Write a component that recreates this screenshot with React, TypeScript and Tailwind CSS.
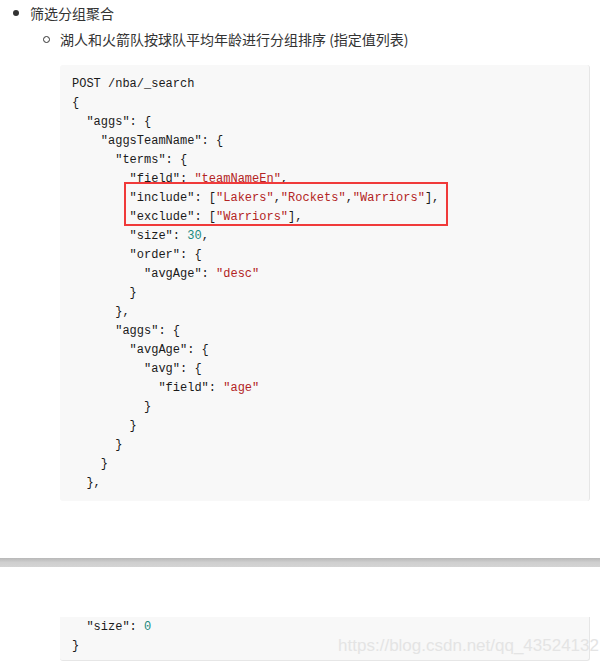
import React from "react";

const S = ({ children }: { children: React.ReactNode }) => (
  <span className="text-[#b32424]">{children}</span>
);
const N = ({ children }: { children: React.ReactNode }) => (
  <span className="text-[#1c8a7e]">{children}</span>
);

export default function App() {
  const mono = { fontFamily: '"Liberation Mono", "Courier New", monospace' };
  return (
    <div
      className="w-[600px] h-[667px] bg-white overflow-hidden text-[#333]"
      style={{ fontFamily: '"Noto Sans CJK SC", "Noto Sans", sans-serif' }}
    >
      <div className="pt-[2px]">
        <div className="flex items-center h-[22px] pl-[13px]">
          <span className="w-[6px] h-[6px] rounded-full bg-[#333] mr-[11px]" />
          <span className="text-[14px]">筛选分组聚合</span>
        </div>
        <div className="flex items-center h-[22px] mt-[4px] pl-[43px]">
          <span className="w-[7px] h-[7px] rounded-full border border-[#333] mr-[10px]" />
          <span className="text-[14px]">湖人和火箭队按球队平均年龄进行分组排序 (指定值列表)</span>
        </div>
      </div>

      <div
        className="mt-[15px] ml-[60px] w-[530px] h-[436px] bg-[#f8f8f8] rounded-[3px] border-r border-[#e6e6e6] pl-[12px] pt-[10px] text-[12px] leading-[19px] whitespace-pre text-[#1a1a1a]"
        style={mono}
      >
        <div>POST /nba/_search</div>
        <div>{"{"}</div>
        <div>{'  "aggs": {'}</div>
        <div>{'    "aggsTeamName": {'}</div>
        <div>{'      "terms": {'}</div>
        <div>{'        "field": '}<S>"teamNameEn"</S>,</div>
        <div className="relative">
          <div className="absolute left-[52px] top-[-7px] w-[324px] h-[44px] border-2 border-[#f03a3a]" />
          <div>{'        "include": ['}<S>"Lakers"</S>,<S>"Rockets"</S>,<S>"Warriors"</S>],</div>
          <div>{'        "exclude": ['}<S>"Warriors"</S>],</div>
        </div>
        <div>{'        "size": '}<N>30</N>,</div>
        <div>{'        "order": {'}</div>
        <div>{'          "avgAge": '}<S>"desc"</S></div>
        <div>{"        }"}</div>
        <div>{"      },"}</div>
        <div>{'      "aggs": {'}</div>
        <div>{'        "avgAge": {'}</div>
        <div>{'          "avg": {'}</div>
        <div>{'            "field": '}<S>"age"</S></div>
        <div>{"          }"}</div>
        <div>{"        }"}</div>
        <div>{"      }"}</div>
        <div>{"    }"}</div>
        <div>{"  },"}</div>
      </div>

      <div className="mt-[57px] h-[9px] bg-gradient-to-b from-[#b8b8b8] via-[#cfcfcf] to-[#d4d4d4]" />

      <div
        className="relative mt-[50px] ml-[60px] w-[530px] h-[44px] bg-[#f8f8f8] rounded-b-[3px] border-r border-b border-[#e6e6e6] pl-[12px] pt-[1px] text-[12px] leading-[19px] whitespace-pre text-[#1a1a1a]"
        style={mono}
      >
        <div>{'  "size": '}<N>0</N></div>
        <div>{"}"}</div>
        <div
          className="absolute right-[-10px] top-[19px] text-[17px] text-[#e4e4e4] whitespace-nowrap"
          style={{ fontFamily: '"Liberation Sans", Arial, sans-serif' }}
        >
          https://blog.csdn.net/qq_43524132
        </div>
      </div>
    </div>
  );
}
